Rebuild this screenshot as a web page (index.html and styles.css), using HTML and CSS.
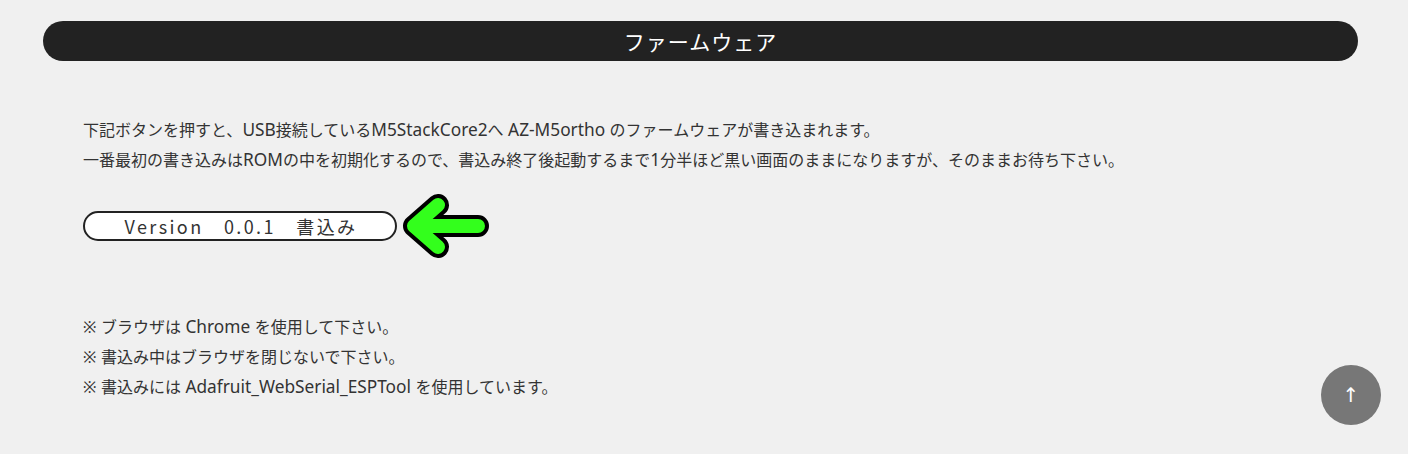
FILE: index.html
```html
<!DOCTYPE html>
<html lang="ja">
<head>
<meta charset="utf-8">
<title>ファームウェア</title>
<link rel="stylesheet" href="styles.css">
</head>
<body>
<section class="section">
  <h2 class="heading">ファームウェア</h2>
  <div class="content">
    <p class="line">下記ボタンを押すと、<span class="en">USB</span>接続している<span class="en">M5StackCore2</span>へ<span class="en"> AZ-M5ortho </span>のファームウェアが書き込まれます。</p>
    <p class="line">一番最初の書き込みは<span class="en">ROM</span>の中を初期化するので、書込み終了後起動するまで<span class="en">1</span>分半ほど黒い画面のままになりますが、そのままお待ち下さい。</p>
    <div class="write-row">
      <button class="write-btn">Version　0.0.1　書込み</button>
      <svg class="arrow" width="96" height="66" viewBox="0 0 96 66">
        <path d="M38 12 L14 33 L38 54 M14 33 L78 33" fill="none" stroke="#000" stroke-width="22" stroke-linecap="round" stroke-linejoin="round"/>
        <path d="M38 12 L14 33 L38 54 M14 33 L78 33" fill="none" stroke="#33ff1c" stroke-width="14" stroke-linecap="round" stroke-linejoin="round"/>
      </svg>
    </div>
    <div class="notes">
      <p class="line">※<span class="en"> </span>ブラウザは<span class="en"> Chrome </span>を使用して下さい。</p>
      <p class="line">※<span class="en"> </span>書込み中はブラウザを閉じないで下さい。</p>
      <p class="line">※<span class="en"> </span>書込みには<span class="en"> Adafruit_WebSerial_ESPTool </span>を使用しています。</p>
    </div>
  </div>
</section>
<a class="to-top" href="#">↑</a>
</body>
</html>
```

FILE: styles.css
```css
html, body {
  margin: 0;
  padding: 0;
}
body {
  background: #f0f0f0;
  color: #333;
  font-family: "Noto Sans", "Noto Sans CJK JP", sans-serif;
  font-size: 16px;
  height: 454px;
  overflow: hidden;
}
.section {
  padding: 21px 50px 0 43px;
}
.heading {
  margin: 0;
  height: 40px;
  border-radius: 20px;
  background: #222;
  color: #fff;
  text-align: center;
  font-family: "Noto Sans CJK JP", sans-serif;
  font-weight: normal;
  font-size: 21px;
  line-height: 40px;
  letter-spacing: 1px;
}
.content {
  padding-left: 40px;
  margin-top: 54px;
}
.line {
  margin: 0;
  line-height: 30px;
  white-space: nowrap;
}
.en {
  font-family: "Noto Sans", sans-serif;
  font-size: 17.3px;
}
.write-row {
  display: flex;
  align-items: center;
  gap: 3px;
  margin-top: 18px;
  height: 66px;
}
.write-btn {
  box-sizing: border-box;
  width: 314px;
  height: 30px;
  padding: 0 0 0 2px;
  border: 2px solid #222;
  border-radius: 15px;
  background: #fff;
  color: #333;
  font-family: "Noto Sans CJK JP", sans-serif;
  font-size: 18px;
  letter-spacing: 2.4px;
  line-height: 26px;
  text-align: center;
}
.arrow {
  display: block;
}
.notes {
  margin-top: 53px;
}
.to-top {
  position: fixed;
  right: 27px;
  bottom: 29px;
  width: 60px;
  height: 60px;
  border-radius: 50%;
  background: #777;
  color: #fff;
  display: flex;
  align-items: center;
  justify-content: center;
  text-decoration: none;
  font-family: "DejaVu Sans", sans-serif;
  font-size: 20px;
  line-height: 1;
}
```
